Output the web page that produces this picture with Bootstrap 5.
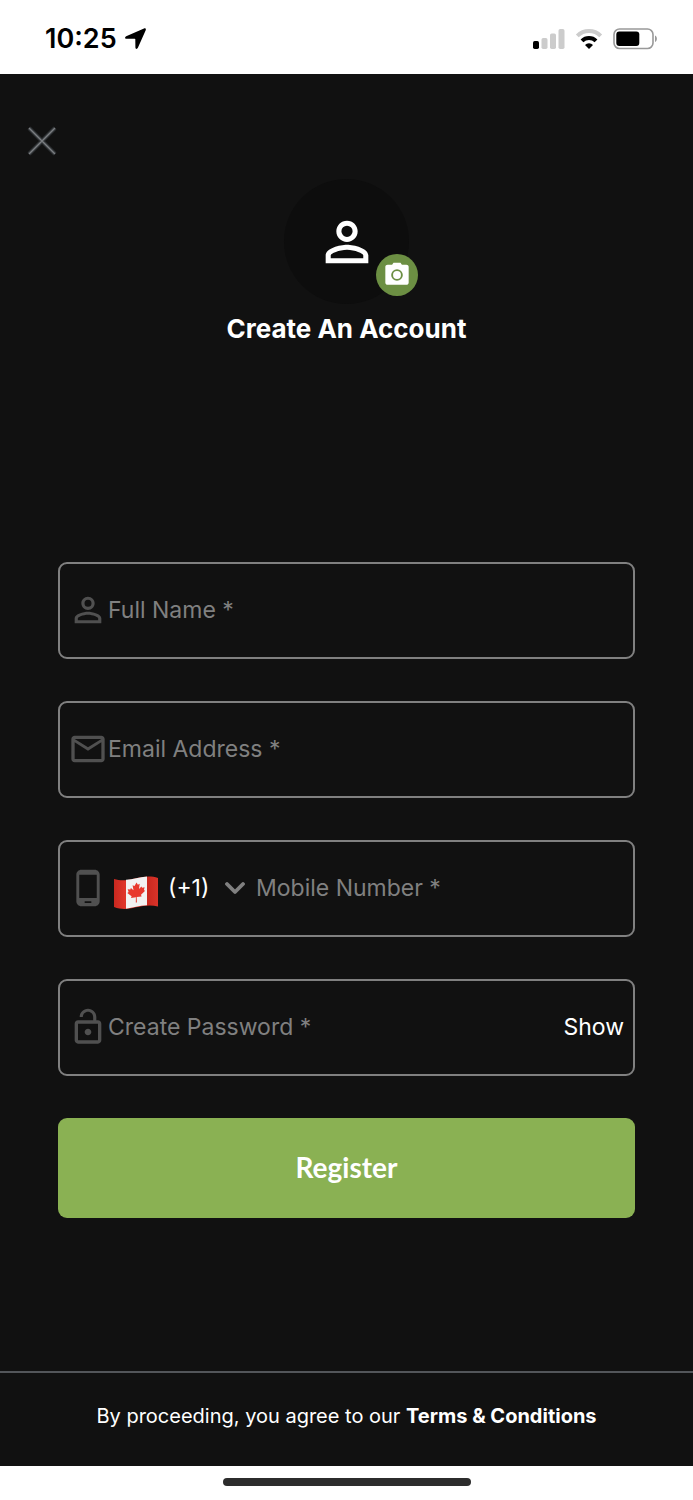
<!DOCTYPE html>
<html lang="en">
<head>
<meta charset="utf-8">
<meta name="viewport" content="width=device-width, initial-scale=1">
<title>Create An Account</title>
<link href="https://cdn.jsdelivr.net/npm/bootstrap@5.3.0/dist/css/bootstrap.min.css" rel="stylesheet">
<style>
  body { font-family: Inter, "Liberation Sans", sans-serif; background: #fff; color: #fff; }
  .status-bar { height: 74px; padding: 3px 35px 0 45px; color: #000; }
  .clock { font-size: 27px; line-height: 32px; font-weight: 500; -webkit-text-stroke: 0; }
  .screen { background: #111; }
  .close-btn { margin: 47px 0 0 22px; width: 40px; height: 40px; }
  .avatar { width: 125px; height: 125px; background: #0d0d0d; margin-top: 18px; }
  .camera-btn { width: 42px; height: 42px; right: -9px; bottom: 8px; background: #6c8f43; }
  .screen-title { font-size: 26px; line-height: 32px; font-weight: 700; margin-top: 9px; }
  .signup { padding: 0 58px; margin-top: 217px; gap: 42px; }
  .field { height: 97px; border: 2px solid #808080; border-radius: 9px; padding: 0 9px 2px 8px; }
  .field svg.lead-icon { width: 40px; height: 40px; fill: #505050; flex: none; }
  .field .form-control { font-size: 23px; line-height: 32px; color: #fff; min-width: 0; }
  .field .form-control::placeholder { color: #808080; opacity: 1; }
  .flag { width: 46px; height: 36px; margin: 10px 0 0 5px; flex: none; }
  .dial-code { width: 89px; flex: none; font-size: 23px; line-height: 32px; color: #fff; padding: 0 30px 0 9px;
    background: transparent url("data:image/svg+xml,%3Csvg xmlns='http://www.w3.org/2000/svg' viewBox='0 0 20 14'%3E%3Cpath d='M2 3l8 8 8-8' fill='none' stroke='%23808080' stroke-width='3.8' stroke-linecap='round' stroke-linejoin='round'/%3E%3C/svg%3E") no-repeat right 3px center / 20px 14px; }
  .show-btn { font-size: 23px; line-height: 32px; }
  .register-btn { height: 100px; border-radius: 9px; background: #8ab153; color: #fff; font: 700 28px/32px Lato, sans-serif; padding-bottom: 8px; }
  .terms { border-top: 2px solid #53565a; height: 95px; font-size: 20px; line-height: 28px; padding-bottom: 7px; }
  .home-bar { height: 34px; padding-bottom: 2px; }
  .home-pill { width: 248px; height: 8px; background: #2c2c2c; }
</style>
</head>
<body class="d-flex flex-column min-vh-100">
<header class="status-bar d-flex align-items-center justify-content-between">
  <div class="d-flex align-items-center gap-2">
    <span class="clock fw-semibold">10:25</span>
    <svg width="21" height="21" viewBox="0 0 21 21" aria-hidden="true"><path d="M19 .4 1.200 8.300C-.5 9.100-.2 10.700 1.500 10.700h8.200c.4 0 .6.200.6.600l.1 8c0 1.900 1.700 2.200 2.500.5L20.700 2.200c.6-1.300-.4-2.400-1.700-1.800z"/></svg>
  </div>
  <div class="d-flex align-items-center">
    <svg width="32" height="20" viewBox="0 0 32 20" aria-hidden="true"><rect y="12" width="6" height="8" rx="1.700"/><g fill="#ccc"><rect x="8.500" y="9" width="6" height="11" rx="1.700"/><rect x="17" y="4.500" width="6" height="15.500" rx="1.700"/><rect x="25.500" width="6" height="20" rx="1.700"/></g></svg>
    <svg class="ms-2 me-2" width="32" height="22" viewBox="0 0 32 22" aria-hidden="true"><g fill="none" stroke-width="4"><path d="M4.300 7.800a16.500 16.500 0 0 1 23.400 0" stroke="#ccc"/><path d="M9 12.900a10 10 0 0 1 14 0" stroke="#000"/></g><path d="M16 21l-4-4a5.700 5.700 0 0 1 8 0z"/></svg>
    <svg width="45" height="22" viewBox="0 0 45 22" aria-hidden="true"><rect x="1" y="1" width="39" height="19.500" rx="5.500" fill="none" stroke="#999" stroke-width="1.600"/><rect x="3.300" y="3.500" width="23" height="14.500" rx="3"/><path d="M42 7.500c2.500 1 2.500 5.500 0 6.500z" fill="#999"/></svg>
  </div>
</header>

<main class="screen flex-grow-1 d-flex flex-column">
  <button type="button" class="close-btn btn p-0 border-0 d-flex align-items-center justify-content-center" aria-label="Close">
    <svg width="30" height="30" viewBox="0 0 30 30"><path d="M2 2l26 26M28 2L2 28" stroke="#303336" stroke-width="4"/><path d="M2 2l26 26M28 2L2 28" stroke="#7b7e81" stroke-width="1.500"/></svg>
  </button>
  <div class="avatar rounded-circle position-relative align-self-center d-flex align-items-center justify-content-center">
    <svg width="64" height="64" viewBox="0 0 24 24" fill="#fff" aria-hidden="true"><path d="M12 5.900a2.100 2.100 0 1 1 0 4.200 2.100 2.100 0 0 1 0-4.200m0 9c2.970 0 6.100 1.460 6.100 2.100v1.100H5.900V17c0-.64 3.130-2.100 6.100-2.100M12 4C9.790 4 8 5.790 8 8s1.790 4 4 4 4-1.790 4-4-1.790-4-4-4zm0 9c-2.670 0-8 1.340-8 4v3h16v-3c0-2.660-5.330-4-8-4z"/></svg>
    <button type="button" class="camera-btn btn rounded-circle border-0 p-0 position-absolute d-flex align-items-center justify-content-center" aria-label="Add photo">
      <svg width="28" height="28" viewBox="0 0 24 24" fill="#fff"><path fill-rule="evenodd" d="M9 1.500 7.800 3.300H4c-1.100 0-2 .7-2 1.700v13.600c0 1 .9 1.800 2 1.800h16c1.100 0 2-.8 2-1.800V5c0-1-.9-1.700-2-1.700h-3.800L15 1.500zm3 15.500a5 5 0 1 1 0-10 5 5 0 0 1 0 10z"/><circle cx="12" cy="12" r="3.400"/></svg>
    </button>
  </div>
  <h1 class="screen-title text-center mb-0">Create An Account</h1>

  <form class="signup d-flex flex-column mb-auto">
    <div class="field d-flex align-items-center">
      <svg class="lead-icon" viewBox="0 0 24 24" aria-hidden="true"><path d="M12 5.900a2.100 2.100 0 1 1 0 4.200 2.100 2.100 0 0 1 0-4.200m0 9c2.970 0 6.100 1.460 6.100 2.100v1.100H5.900V17c0-.64 3.130-2.100 6.100-2.100M12 4C9.790 4 8 5.790 8 8s1.790 4 4 4 4-1.790 4-4-1.790-4-4-4zm0 9c-2.670 0-8 1.340-8 4v3h16v-3c0-2.660-5.330-4-8-4z"/></svg>
      <input type="text" class="form-control bg-transparent border-0 shadow-none p-0" placeholder="Full Name *" aria-label="Full Name">
    </div>
    <div class="field d-flex align-items-center">
      <svg class="lead-icon" viewBox="0 0 24 24" aria-hidden="true"><path d="M20 4H4c-1.100 0-2 .9-2 2v12c0 1.100.9 2 2 2h16c1.100 0 2-.9 2-2V6c0-1.100-.9-2-2-2zm0 14H4V8l8 5 8-5v10zm-8-7L4 6h16l-8 5z"/></svg>
      <input type="email" class="form-control bg-transparent border-0 shadow-none p-0" placeholder="Email Address *" aria-label="Email Address">
    </div>
    <div class="field d-flex align-items-center">
      <svg class="lead-icon" viewBox="0 0 24 24" aria-hidden="true"><path d="M16 1H8C6.340 1 5 2.340 5 4v16c0 1.660 1.340 3 3 3h8c1.660 0 3-1.340 3-3V4c0-1.660-1.340-3-3-3zm-2 20h-4v-1h4v1zm3.250-3H6.750V4h10.500v14z"/></svg>
      <svg class="flag" viewBox="0 0 46 36" aria-hidden="true">
        <defs><linearGradient id="cloth"><stop offset="0" stop-color="#c9281f"/><stop offset=".25" stop-color="#e0352b"/><stop offset=".75" stop-color="#c9281f"/><stop offset="1" stop-color="#d93329"/></linearGradient></defs>
        <path d="M1 4c8 2.500 14 1 22-.8S38 .5 45 3v28.500c-7-2-14-1-22 .8S9 35 1 32z" fill="url(#cloth)"/>
        <path d="M13 4.800c7-.6 13-2.600 21-3.300v28.700c-8 .5-14 2.500-21 3.500z" fill="#f2f2f2"/>
        <path d="M23.500 7.500l-2 3.500-1.900-.8.900 5-2.600-2.300-.6 1.500-2.600-.2.900 2.900-1.300.8 4.300 3.400-.6 1.700 4.900-.8-.1 5.300h1.100l-.2-5.500 4.900-.6-.6-1.600 4.200-4-1.300-.6.700-2.900-2.500.5-.7-1.400-2.400 2.500.7-5.200-1.800 1z" fill="#e8392e"/>
      </svg>
      <select class="dial-code form-select border-0 shadow-none rounded-0" aria-label="Country code"><option>(+1)</option></select>
      <input type="tel" class="form-control bg-transparent border-0 shadow-none p-0 ms-2" placeholder="Mobile Number *" aria-label="Mobile Number">
    </div>
    <div class="field d-flex align-items-center">
      <svg class="lead-icon" viewBox="0 0 24 24" aria-hidden="true"><path d="M12 17c1.100 0 2-.9 2-2s-.9-2-2-2-2 .9-2 2 .9 2 2 2zm6-9h-1V6c0-2.760-2.240-5-5-5S7 3.240 7 6h1.900c0-1.710 1.390-3.100 3.100-3.100 1.710 0 3.100 1.390 3.100 3.100v2H6c-1.100 0-2 .9-2 2v10c0 1.100.9 2 2 2h12c1.100 0 2-.9 2-2V10c0-1.100-.9-2-2-2zm0 12H6V10h12z"/></svg>
      <input type="password" class="form-control bg-transparent border-0 shadow-none p-0" placeholder="Create Password *" aria-label="Create Password">
      <button type="button" class="show-btn btn border-0 p-0 text-white">Show</button>
    </div>
    <button type="submit" class="register-btn btn border-0">Register</button>
  </form>

  <div class="terms d-flex align-items-center justify-content-center">
    <p class="mb-0 text-center">By proceeding, you agree to our <a href="#" class="text-white text-decoration-none fw-bold">Terms &amp; Conditions</a></p>
  </div>
</main>
<footer class="home-bar d-flex align-items-center justify-content-center"><div class="home-pill rounded-pill"></div></footer>
<script src="https://cdn.jsdelivr.net/npm/bootstrap@5.3.0/dist/js/bootstrap.bundle.min.js"></script>
</body>
</html>
